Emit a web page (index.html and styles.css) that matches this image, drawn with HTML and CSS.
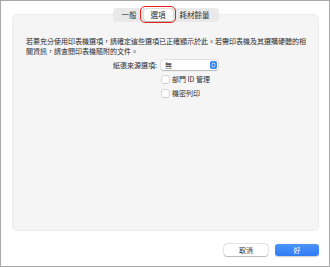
FILE: index.html
```html
<!DOCTYPE html>
<html lang="zh-Hant">
<head>
<meta charset="utf-8">
<link rel="stylesheet" href="styles.css">
</head>
<body>
<div class="window">
  <div class="tabs-wrap">
    <div class="tabs">
      <span class="tab">一般</span>
      <span class="tab selected">選項<span class="highlight"></span></span>
      <span class="tab">耗材餘量</span>
    </div>
  </div>
  <div class="panel">
    <p class="desc">若要充分使用印表機選項，請確定這些選項已正確顯示於此。若需印表機及其選購硬體的相關資訊，請查閱印表機隨附的文件。</p>
    <div class="form">
      <span class="label">紙張來源選項:</span>
      <div class="popup">
        <span class="popup-text">無</span>
        <span class="stepper">
          <svg width="7" height="8" viewBox="0 0 7 8"><path d="M2 3.2 L3.5 1.8 L5 3.2 M2 4.8 L3.5 6.2 L5 4.8" fill="none" stroke="#fff" stroke-width="0.9" stroke-linecap="round" stroke-linejoin="round"/></svg>
        </span>
      </div>
      <span></span>
      <label class="check"><span class="box"></span>部門 ID 管理</label>
      <span></span>
      <label class="check"><span class="box"></span>機密列印</label>
    </div>
  </div>
  <div class="buttons">
    <button class="btn">取消</button>
    <button class="btn primary">好</button>
  </div>
</div>
</body>
</html>
```
FILE: styles.css
```css
* { box-sizing: border-box; }
html, body {
  margin: 0;
  padding: 0;
  background: #ffffff;
}
body {
  font-family: "Noto Sans CJK TC", "Noto Sans", sans-serif;
  color: #2b2b2b;
}
.window {
  width: 330px;
  height: 267px;
  border: 1px solid #a9a9a9;
  padding: 7px 10px 10px 11px;
  display: flex;
  flex-direction: column;
  background: #ffffff;
}
.tabs-wrap {
  display: flex;
  justify-content: center;
  margin-bottom: -8px;
  position: relative;
  z-index: 1;
}
.tabs {
  display: flex;
  height: 14px;
  padding: 1px 2px;
  background: #e9e9e9;
  border-radius: 4px;
}
.tab {
  font-size: 7.5px;
  line-height: 12px;
  padding: 0 7px;
  color: #303030;
  border-radius: 3px;
}
.tab.selected {
  position: relative;
  background: #ffffff;
  box-shadow: 0 0.5px 1.5px rgba(0,0,0,0.25);
}
.highlight {
  position: absolute;
  left: -4px;
  right: -3px;
  top: -3px;
  bottom: -2px;
  border: 1.5px solid #e3221c;
  border-radius: 5px;
}
.panel {
  flex: 1;
  background: #f5f5f5;
  border: 1px solid #ececec;
  border-radius: 5px;
  padding: 21px 8px 0 13px;
}
.desc {
  margin: 0;
  width: 283px;
  font-size: 7px;
  line-height: 10px;
  color: #2b2b2b;
}
.form {
  margin-top: 4px;
  display: grid;
  grid-template-columns: 131px auto;
  column-gap: 4px;
  row-gap: 4px;
  align-items: center;
}
.label {
  font-size: 7px;
  line-height: 10px;
  text-align: right;
  color: #2b2b2b;
}
.popup {
  width: 57px;
  height: 10px;
  background: #ffffff;
  border-radius: 2.5px;
  box-shadow: 0 0 0 0.5px rgba(0,0,0,0.12), 0 0.5px 1px rgba(0,0,0,0.2);
  display: flex;
  align-items: center;
  justify-content: space-between;
  padding: 0 1px 0 4px;
}
.popup-text {
  font-size: 7px;
  line-height: 10px;
}
.stepper {
  width: 7px;
  height: 8px;
  background: #3a84f6;
  border-radius: 2px;
  display: flex;
}
.check {
  display: flex;
  align-items: center;
  gap: 3px;
  font-size: 7px;
  line-height: 10px;
  height: 10px;
  color: #2b2b2b;
}
.box {
  width: 7px;
  height: 7px;
  background: #ffffff;
  border-radius: 1.5px;
  box-shadow: 0 0 0 0.5px rgba(0,0,0,0.25), 0 0.5px 0.5px rgba(0,0,0,0.1);
  margin-left: 1px;
}
.buttons {
  display: flex;
  justify-content: flex-end;
  gap: 7px;
  margin-top: 13px;
}
.btn {
  width: 44px;
  height: 12px;
  padding: 0;
  border: none;
  border-radius: 3px;
  font-family: "Noto Sans CJK TC", "Noto Sans", sans-serif;
  font-size: 7px;
  line-height: 12px;
  color: #2b2b2b;
  background: #ffffff;
  box-shadow: 0 0 0 0.5px rgba(0,0,0,0.18), 0 0.5px 1px rgba(0,0,0,0.2);
}
.btn.primary {
  color: #ffffff;
  background: linear-gradient(#4b94f8, #2f7bf5);
  box-shadow: 0 0.5px 1px rgba(0,0,0,0.2);
}
```
